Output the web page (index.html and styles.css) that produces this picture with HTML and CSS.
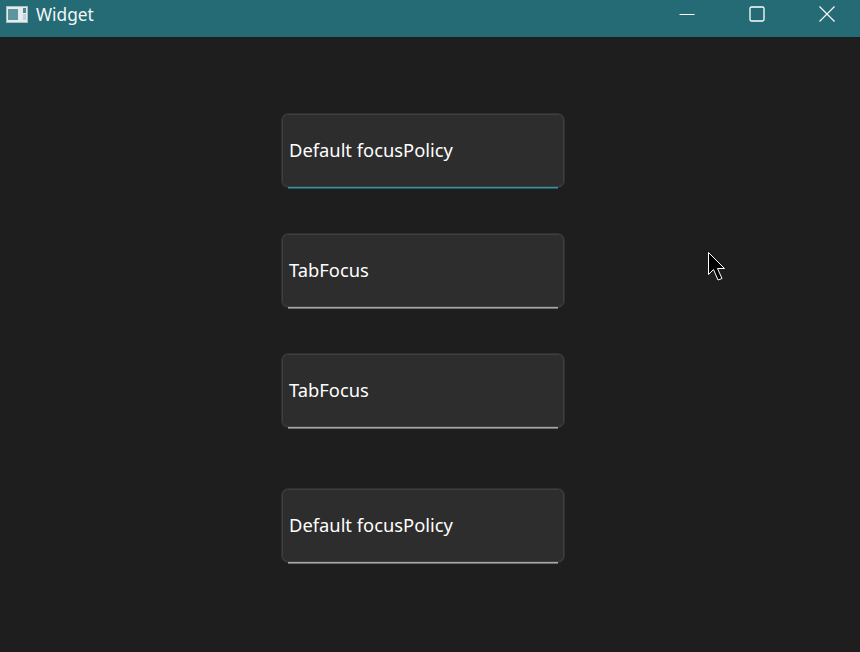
FILE: index.html
```html
<!DOCTYPE html>
<html lang="en">
<head>
<meta charset="utf-8">
<title>Widget</title>
<link rel="stylesheet" href="styles.css">
</head>
<body>
<div class="window">
  <header class="titlebar">
    <svg class="app-icon" width="22" height="17" viewBox="0 0 22 17">
      <rect x="0" y="0" width="22" height="17" fill="#e6eced"/>
      <rect x="0.5" y="0.5" width="21" height="16" fill="none" stroke="#a9c0c3"/>
      <rect x="2" y="3" width="10" height="11" fill="#5c979f"/>
      <rect x="17" y="2" width="3" height="5" fill="#4b8892"/>
      <rect x="17" y="8" width="3" height="6" fill="#c3d2d4"/>
    </svg>
    <span class="title">Widget</span>
    <div class="controls">
      <span class="ctl"><svg width="16" height="16" viewBox="0 0 16 16"><path d="M0.5 8.5H15.5" stroke="#fff" fill="none"/></svg></span>
      <span class="ctl"><svg width="16" height="16" viewBox="0 0 16 16"><rect x="1" y="1" width="14" height="14" rx="1.5" stroke="#fff" stroke-width="1.3" fill="none"/></svg></span>
      <span class="ctl"><svg width="16" height="16" viewBox="0 0 16 16"><path d="M0.5 0.5L15.5 15.5M15.5 0.5L0.5 15.5" stroke="#fff" stroke-width="1.1" fill="none"/></svg></span>
    </div>
  </header>
  <main class="content">
    <div class="field">Default focusPolicy<i class="line active"></i></div>
    <div class="field">TabFocus<i class="line"></i></div>
    <div class="field">TabFocus<i class="line"></i></div>
    <div class="field last">Default focusPolicy<i class="line"></i></div>
  </main>
  <svg class="cursor" width="20" height="32" viewBox="0 0 20 32">
    <path d="M1.5 1.5V23.5L6.5 18.5L11 29L15 27.5L10.5 17.5H17.5Z" fill="#000" stroke="#fff" stroke-width="1"/>
  </svg>
</div>
</body>
</html>
```
FILE: styles.css
```css
* { box-sizing: border-box; }
html, body { margin: 0; height: 100%; }
body { background: #1e1e1e; overflow: hidden; }
.window {
  position: relative;
  width: 860px;
  height: 652px;
  display: flex;
  flex-direction: column;
  font-family: "Noto Sans", "Open Sans", sans-serif;
  color: #fff;
}
.titlebar {
  height: 37px;
  background: #256b75;
  display: flex;
  align-items: center;
  padding-left: 6px;
  flex: none;
}
.app-icon { margin-top: -8px; }
.title { margin-left: 8px; font-size: 17.3px; margin-top: -8px; color: #f2f7f8; }
.controls { margin-left: auto; display: flex; margin-right: -2px; }
.ctl {
  width: 70px;
  height: 30px;
  display: flex;
  align-items: center;
  justify-content: center;
  margin-top: -9px;
}
.content {
  flex: 1;
  padding: 76px 0 0 281px;
  display: flex;
  flex-direction: column;
  gap: 45px;
}
.field {
  position: relative;
  width: 284px;
  height: 75px;
  background: #2d2d2d;
  border: 1px solid #303030;
  border-radius: 7px;
  box-shadow: inset 0 0 0 1px #3f3f3f;
  display: flex;
  align-items: center;
  padding: 0 0 2px 7px;
  font-size: 18.33px;
  color: #fff;
}
.field.last { margin-top: 15px; }
.line {
  position: absolute;
  left: 6px;
  right: 6px;
  bottom: -2px;
  height: 2px;
  background: #6f6f6f;
  border-top: 1px solid #a8a8a8;
}
.line.active { background: #1f5f69; border-top-color: #2f93a2; }
.cursor { position: absolute; left: 707px; top: 251px; }
```
